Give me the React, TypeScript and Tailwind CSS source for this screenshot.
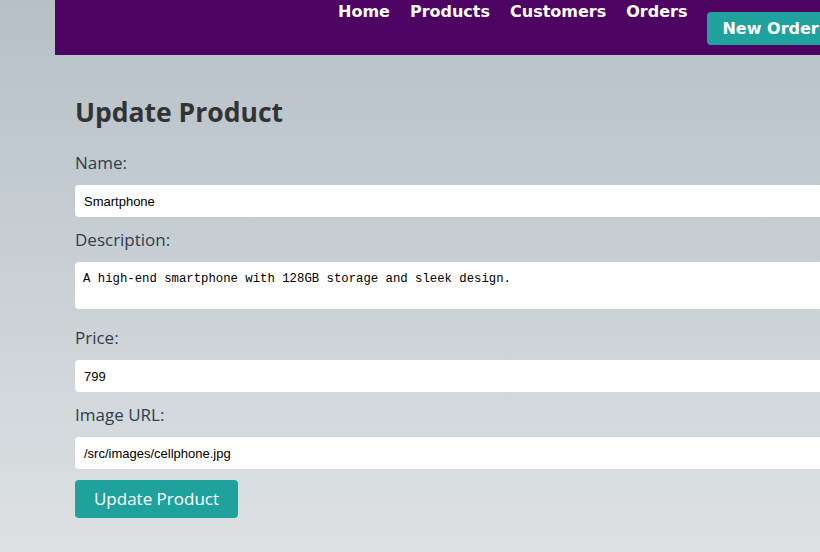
const Field: React.FC<{ label: string; value: string }> = ({ label, value }) => {
  return (
    <div>
      <label className="block text-[17px] leading-[24px] text-[#2f3d4c] mb-[10px]">{label}</label>
      <input
        type="text"
        defaultValue={value}
        className="block w-full h-[32px] px-[9px] bg-white rounded-[4px] text-[13px] text-black font-['Liberation_Sans',Arial,sans-serif] focus:outline-none"
      />
    </div>
  );
};

export default function App() {
  return (
    <div className="w-[820px] h-[552px] overflow-hidden bg-gradient-to-b from-[#b5c0c7] to-[#dde1e3] font-['Open_Sans','Noto_Sans',sans-serif]">
      <div className="ml-[55px] w-[900px]">
        {/* Top bar */}
        <nav className="h-[55px] bg-[#4e0462] flex items-start pl-[283px]">
          <div className="flex gap-[20px] pt-[1px] font-['DejaVu_Sans',Verdana,sans-serif] font-bold text-white text-[16px] leading-[22px]">
            <a href="#">Home</a>
            <a href="#">Products</a>
            <a href="#">Customers</a>
            <a href="#">Orders</a>
          </div>
          <button className="ml-[20px] mt-[12px] h-[33px] px-[15px] rounded-[4px] bg-[#1fa19e] text-white font-bold text-[16px] font-['DejaVu_Sans',Verdana,sans-serif] whitespace-nowrap">
            New Order's
          </button>
        </nav>

        {/* Form */}
        <main className="px-[20px]">
          <h2 className="mt-[40px] text-[26.5px] leading-[34px] font-bold text-[#333333]">Update Product</h2>
          <form className="mt-[22px] flex flex-col gap-[11px]">
            <Field label="Name:" value="Smartphone" />
            <div>
              <label className="block text-[17px] leading-[24px] text-[#2f3d4c] mb-[10px]">Description:</label>
              <textarea
                defaultValue="A high-end smartphone with 128GB storage and sleek design."
                className="block w-full h-[47px] px-[8px] pt-[9px] resize-none bg-white rounded-[4px] text-[12.3px] leading-[16px] text-black font-['Liberation_Mono','DejaVu_Sans_Mono',monospace] focus:outline-none"
              />
            </div>
            <div className="mt-[6px]">
              <Field label="Price:" value="799" />
            </div>
            <Field label="Image URL:" value="/src/images/cellphone.jpg" />
            <div>
              <button
                type="button"
                className="h-[38px] w-[163px] rounded-[4px] bg-[#1fa19e] text-white text-[17px]"
              >
                Update Product
              </button>
            </div>
          </form>
        </main>
      </div>
    </div>
  );
}
